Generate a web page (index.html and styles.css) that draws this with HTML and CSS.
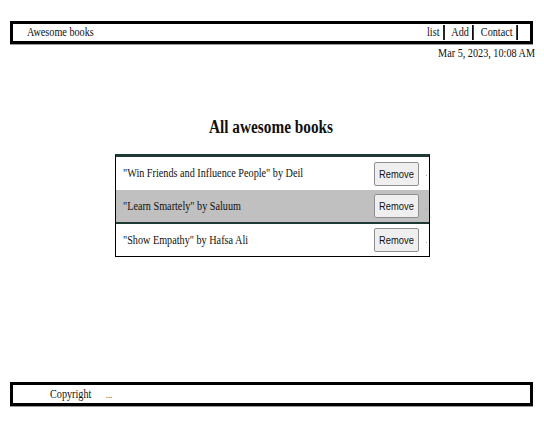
FILE: index.html
```html
<!DOCTYPE html>
<html>
<head>
<meta charset="utf-8">
<link rel="stylesheet" href="styles.css">
</head>
<body>
<div class="page">
  <header class="topbar">
    <span class="brand squeeze-left">Awesome books</span>
    <nav class="nav squeeze-right">
      <a class="nav-link">list</a>
      <a class="nav-link">Add</a>
      <a class="nav-link">Contact</a>
    </nav>
  </header>
  <div class="date"><span class="squeeze-right">Mar 5, 2023, 10:08 AM</span></div>
  <main class="main">
    <h1 class="title"><span class="squeeze-center">All awesome books</span></h1>
    <div class="books">
      <div class="book">
        <span class="book-text squeeze-left">"Win Friends and Influence People" by Deil</span>
        <button class="remove"><span class="squeeze-center">Remove</span></button>
        <span class="dot"></span>
      </div>
      <div class="book alt">
        <span class="book-text squeeze-left">"Learn Smartely" by Saluum</span>
        <button class="remove"><span class="squeeze-center">Remove</span></button>
        <span class="dot"></span>
      </div>
      <div class="book last">
        <span class="book-text squeeze-left">"Show Empathy" by Hafsa Ali</span>
        <button class="remove"><span class="squeeze-center">Remove</span></button>
        <span class="dot"></span>
      </div>
    </div>
  </main>
  <footer class="footer">
    <span class="squeeze-left footer-text"><span class="copy">Copyright</span><span class="dots">...</span></span>
  </footer>
</div>
</body>
</html>
```

FILE: styles.css
```css
html, body {
  margin: 0;
  padding: 0;
  background: #fff;
}
body {
  font-family: "Liberation Serif", "Times New Roman", serif;
  font-size: 12px;
  color: #111;
}
.squeeze-left,
.squeeze-right,
.squeeze-center {
  display: inline-block;
  transform: scaleX(0.85);
}
.squeeze-left { transform-origin: left center; }
.squeeze-right { transform-origin: right center; }
.squeeze-center { transform-origin: center center; }
.page {
  height: 448px;
  display: flex;
  flex-direction: column;
  padding: 21px 11px 0 10px;
  box-sizing: border-box;
}
.topbar {
  height: 23px;
  box-sizing: border-box;
  border: 3px solid #000;
  display: flex;
  align-items: center;
  justify-content: space-between;
  padding: 0 12px 0 14px;
  box-shadow: 0 1px 0 #9a9a9a;
}
.brand {
  font-size: 12px;
}
.nav {
  display: flex;
  align-items: center;
}
.nav-link {
  padding: 0 4px 0 8px;
  border-right: 2px solid #000;
  line-height: 15px;
  color: #111;
}
.nav-link:first-child {
  padding-left: 0;
}
.date {
  text-align: right;
  margin-top: 2px;
  margin-right: -2px;
  line-height: 14px;
}
.main {
  flex: 1;
  display: flex;
  flex-direction: column;
  align-items: center;
}
.title {
  font-size: 18px;
  font-weight: bold;
  margin: 56px 0 0 0;
  line-height: 22px;
}
.books {
  margin-top: 16px;
  width: 313px;
  margin-left: 1px;
  border-top: 3px solid #1f3a34;
  border-left: 1px solid #000;
  border-right: 1px solid #000;
  border-bottom: 1px solid #000;
}
.book {
  position: relative;
  display: flex;
  align-items: center;
  justify-content: space-between;
  height: 33px;
  padding: 0 10px 0 7px;
}
.book.alt {
  background: #c0c0c0;
  height: 32px;
  border-bottom: 2px solid #1f3a34;
}
.book.last {
  height: 32px;
}
.book-text {
  font-size: 12px;
}
.remove {
  font-family: "Liberation Sans", Arial, sans-serif;
  font-size: 11px;
  color: #111;
  background: #efefef;
  border: 1px solid #8f8f8f;
  border-radius: 2px;
  width: 45px;
  height: 24px;
  padding: 0;
}
.dot {
  position: absolute;
  right: 2px;
  top: 18px;
  width: 1px;
  height: 1px;
  background: #aaa;
}
.footer {
  height: 24px;
  box-sizing: border-box;
  border: 3px solid #000;
  margin-bottom: 42px;
  display: flex;
  align-items: center;
  padding-left: 37px;
  box-shadow: 0 1px 0 #9a9a9a;
}
.copy {
  font-size: 12px;
}
.dots {
  margin-left: 17px;
  font-size: 10px;
  color: #555;
}
```
